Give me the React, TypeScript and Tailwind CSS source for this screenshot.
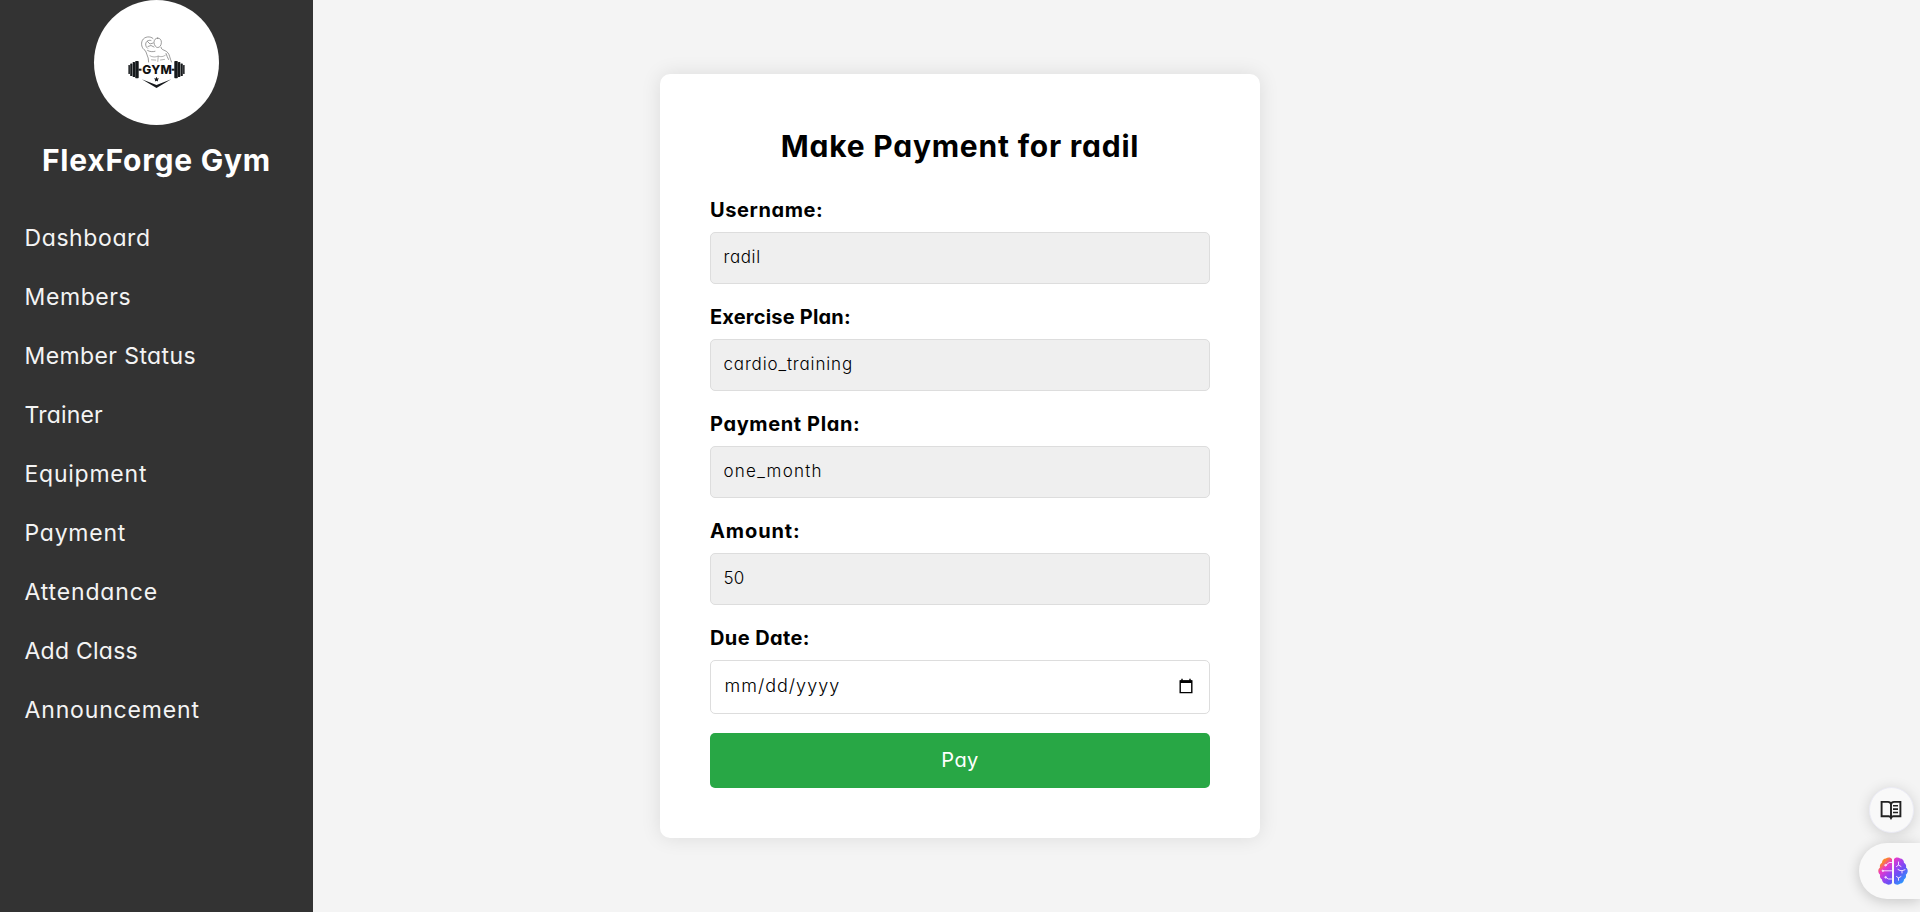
import clsx from 'clsx';

const menu = [
  { label: 'Dashboard', spacing: 'tracking-[0.6px]' },
  { label: 'Members', spacing: 'tracking-[0.6px]' },
  { label: 'Member Status', spacing: 'tracking-[0.4px]' },
  { label: 'Trainer', spacing: 'tracking-[0.19px]' },
  { label: 'Equipment', spacing: 'tracking-[0.76px]' },
  { label: 'Payment', spacing: 'tracking-[0.75px]' },
  { label: 'Attendance', spacing: 'tracking-[0.85px]' },
  { label: 'Add Class', spacing: 'tracking-[0.24px]' },
  { label: 'Announcement', spacing: 'tracking-[0.84px]' },
];

const fields = [
  { label: 'Username:', labelSpacing: 'tracking-[0.6px]', value: 'radil', valueSpacing: 'tracking-[0.6px]' },
  { label: 'Exercise Plan:', labelSpacing: 'tracking-[0.2px]', value: 'cardio_training', valueSpacing: 'tracking-[0.85px]' },
  { label: 'Payment Plan:', labelSpacing: 'tracking-[0.62px]', value: 'one_month', valueSpacing: 'tracking-[1.25px]' },
  { label: 'Amount:', labelSpacing: 'tracking-[0.9px]', value: '50', valueSpacing: 'tracking-[0.2px]' },
];

function GymLogo() {
  return (
    <svg viewBox="94 0 125 125" className="size-[125px] shrink-0 rounded-full bg-white">
      {/* flexing figure */}
      <g fill="none" stroke="#666" strokeWidth="0.65" strokeLinecap="round" strokeLinejoin="round">
        <path d="M153 38.500c-2.500-2.600-8.500-2.200-10.600 1.800-1.800 3.600-.6 8.200 2.800 10.200 1.200 1.800 1.900 5 3 7.500l.4 4" />
        <path d="M151 40.500c-2.600-.9-5 .8-5.300 3.500-.1 1.800.6 3.200 1.900 4.300M147.500 41.500l2.500 2.500 3.200-1M148 46.500l3-1 3 1.500" />
        <path d="M157.700 38.100c2.400 0 3.800 1.900 3.700 4.400-.1 2.800-1.700 5-3.600 5s-3.700-2.200-3.800-5c0-2.500 1.300-4.400 3.700-4.400z" />
        <path d="M161 47.200c.2 1.400 1 2.300 3 3 3.600 1.200 5 3.600 5.700 6.500.4 2 1.200 3.300 1.800 5.300M147.600 50.500c2.300 1.300 5 1.500 7.400.8M166 53.500c.6 2.300 1.800 4 2.600 6" />
        <path d="M150 55.800c2.700 1.500 5.500 1.600 8.200.2 2.600 1.200 5 .8 7.200-.8M158.200 56.500l-.4 5M151.500 59.800l4.200.3M160.500 60l4-.6" strokeWidth="0.500" />
      </g>
      {/* barbell */}
      <g fill="#16191c">
        <rect x="128.400" y="65" width="1.500" height="9" rx=".5" />
        <rect x="130.200" y="63.500" width="2.200" height="12.500" rx=".6" />
        <rect x="132.700" y="62" width="2.300" height="15" rx=".6" />
        <rect x="135.200" y="61" width="3.500" height="17.300" rx=".7" />
        <rect x="138.500" y="68.700" width="3" height="2" />
        <rect x="171.600" y="68.700" width="3" height="2" />
        <rect x="174.300" y="61" width="3.500" height="17.300" rx=".7" />
        <rect x="178" y="62" width="2.300" height="15" rx=".6" />
        <rect x="180.600" y="63.500" width="2.200" height="12.500" rx=".6" />
        <rect x="183.100" y="65" width="1.500" height="9" rx=".5" />
        <path d="M156.500 76.800l.8 1.600 1.800.2-1.300 1.200.3 1.800-1.600-.9-1.600.9.3-1.800-1.300-1.200 1.800-.2z" />
        <path d="M141.800 79.200l14.700 5.800 14.700-5.800-14.700 8.900z" />
      </g>
      <text x="142.300" y="74.100" fontSize="12" fontWeight="800" textLength="29.500" lengthAdjust="spacing" fill="#111">
        GYM
      </text>
    </svg>
  );
}

function CalendarIcon() {
  return (
    <svg viewBox="0 0 14 16" className="h-4 w-3.5" fill="none" stroke="#000">
      <path d="M1.200 3h11.600v11.600H1.200z" strokeWidth="1.400" />
      <path d="M1 3.700h12" strokeWidth="2.600" />
      <path d="M3 .8v2M11 .8v2" strokeWidth="1.400" />
    </svg>
  );
}

function ReaderIcon() {
  return (
    <svg viewBox="0 0 22 20" className="h-5 w-[22px]" fill="none" stroke="#222" strokeWidth="1.900">
      <path d="M11 4.200C10.600 2.400 9.400 1.900 8 1.900H1.600v14.300h7c1.300 0 2 .4 2.400 1.400.4-1 1.100-1.400 2.400-1.400h7V1.900H14c-1.400 0-2.600.5-3 2.300zM11 4v13" />
      <path d="M9.300 16.500h3.400L11 19.500z" fill="#222" stroke="none" />
      <path d="M13 5.700h5M13 9.100h5M13 12.500h5" strokeWidth="1.600" />
    </svg>
  );
}

function BrainIcon() {
  return (
    <svg viewBox="0 0 30 28" className="h-7 w-[30px]">
      <defs>
        <linearGradient id="brain" x1="3" y1="1" x2="27" y2="26" gradientUnits="userSpaceOnUse">
          <stop offset="0" stopColor="#ff9a1f" />
          <stop offset=".14" stopColor="#fb8035" />
          <stop offset=".28" stopColor="#ee38c4" />
          <stop offset=".48" stopColor="#a341ee" />
          <stop offset=".68" stopColor="#6752f5" />
          <stop offset="1" stopColor="#20a5ff" />
        </linearGradient>
      </defs>
      <g fill="url(#brain)">
        <path d="M14 2v24c-1 1.800-4.500 2.300-6.500.5-1.800 0-3.500-1.800-3.500-4-1.800-1-2.500-3-1.800-4.800C-.3 16.200-.3 12 2 10.500 1.500 8.500 2.300 6.600 4 5.700 4 3.300 5.800 1.700 7.800 1.600 9.800-.3 13 .2 14 2z" />
        <path d="M16 2v24c1 1.800 4.500 2.300 6.500.5 1.800 0 3.500-1.800 3.500-4 1.800-1 2.500-3 1.800-4.800 2.500-1.500 2.500-5.700.2-7.200.5-2-.3-3.900-2-4.800 0-2.400-1.800-4-3.800-4.100C20.200-.3 17 .2 16 2z" />
      </g>
      <g fill="none" stroke="#f4dcff" strokeWidth="1" strokeLinecap="round" strokeLinejoin="round">
        <path d="M13.500 5.500h-2.300L8 8M5 13.800h8.500M13.500 22h-3L8 20.500M20.500 5v3l-2 1.500M20.500 8l2.500 1.500M20 12.500l2 1 2 .2 3-1M24 13.700v2.300M18.500 19.500l2 1.500 2.500-1.500M20.500 21v2.300" />
        <circle cx="7.500" cy="8.200" r=".8" fill="#f4dcff" />
        <circle cx="4.800" cy="13.800" r=".7" fill="#f4dcff" />
        <circle cx="7.600" cy="20.300" r=".8" fill="#f4dcff" />
      </g>
    </svg>
  );
}

export default function App() {
  return (
    <div className="relative flex h-[912px] w-full overflow-hidden bg-[#f4f4f4] font-['Inter','Liberation_Sans',sans-serif] text-black [font-feature-settings:'cv11']">
      <aside className="flex w-[313px] shrink-0 flex-col items-center bg-[#333]">
        <GymLogo />
        <h2 className="mt-[13px] text-[30px] leading-[45px] font-bold tracking-[0.78px] whitespace-nowrap text-white">FlexForge Gym</h2>
        <nav className="mt-[26px] flex flex-col self-stretch pl-[24.5px]">
          {menu.map((item) => (
            <a key={item.label} href="#" className={clsx('h-[59px] text-[23px] leading-[59px] text-[#f4f4f4]', item.spacing)}>
              {item.label}
            </a>
          ))}
        </nav>
      </aside>

      <main className="flex grow pt-[74px] pl-[347px]">
        <form className="flex h-[764px] w-[600px] flex-col rounded-[10px] bg-white p-[50px] shadow-[0_0_20px_rgba(0,0,0,0.1)]">
          <h2 className="mb-[26px] text-center text-[30px] leading-[45px] font-bold tracking-[0.78px]">Make Payment for radil</h2>
          {fields.map((f) => (
            <label key={f.label} className="mb-[18px] flex flex-col gap-[7px]">
              <span className={clsx('text-xl leading-[30px] font-bold', f.labelSpacing)}>{f.label}</span>
              <input
                readOnly
                value={f.value}
                className={clsx('h-[52px] rounded-[5px] border border-[#ddd] bg-[#efefef] pr-3 pb-[2px] pl-[12.5px] text-[17px] font-[350]', f.valueSpacing)}
              />
            </label>
          ))}
          <div className="flex flex-col gap-[7px]">
            <span className="text-xl leading-[30px] font-bold tracking-[0.4px]">Due Date:</span>
            <div className="flex h-[54px] items-center justify-between rounded-[5px] border border-[#ddd] pr-4 pb-[2px] pl-[13.5px] text-lg font-[350] tracking-[1px]">
              <span>mm/dd/yyyy</span>
              <CalendarIcon />
            </div>
          </div>
          <button type="button" className="mt-[19px] h-[55px] shrink-0 rounded-[5px] bg-[#28a745] pb-px text-xl tracking-[0.4px] text-white">
            Pay
          </button>
        </form>
      </main>

      {/* floating shortcuts over the page corner */}
      <button type="button" className="absolute top-[787px] left-[1869px] flex h-[46px] w-[45px] items-center justify-center rounded-full border border-[#ebebf5] bg-[#f9f9f9] pr-px shadow-[0_2px_14px_rgba(0,0,0,0.15)]">
        <ReaderIcon />
      </button>
      <button type="button" className="absolute top-[843px] right-0 flex h-14 w-[61px] items-center rounded-l-full bg-[#f9f9f9] pl-[19px] shadow-[0_2px_14px_rgba(0,0,0,0.2)]">
        <BrainIcon />
      </button>
    </div>
  );
}
